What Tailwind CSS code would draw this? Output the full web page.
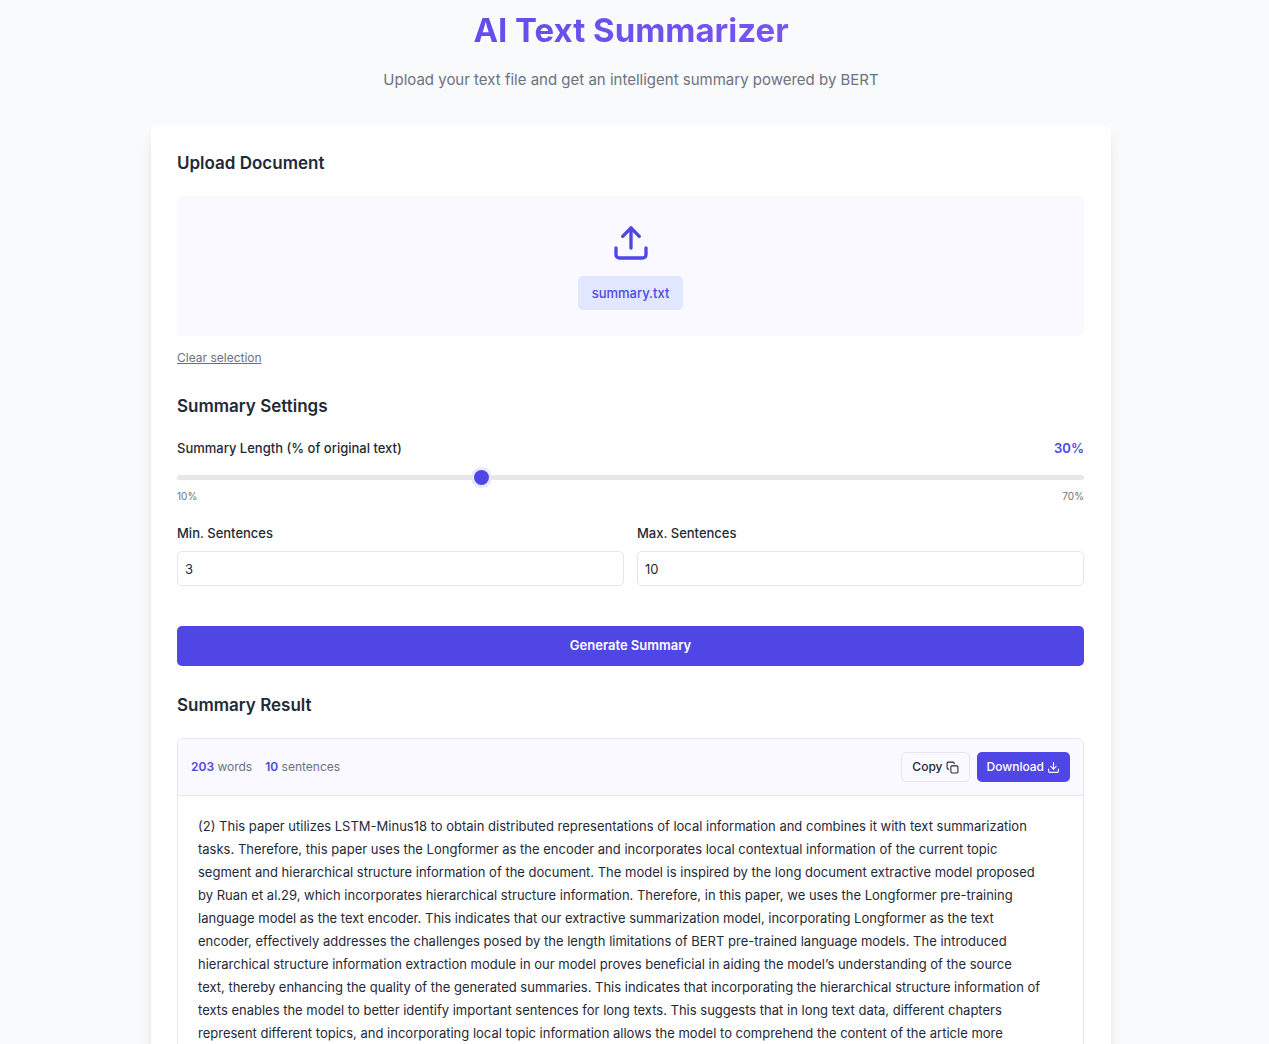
<!DOCTYPE html>
<html lang="en">
<head>
<meta charset="utf-8">
<meta name="viewport" content="width=device-width, initial-scale=1">
<title>AI Text Summarizer</title>
<script src="https://cdn.jsdelivr.net/npm/@tailwindcss/browser@4"></script>
</head>
<body class="min-h-screen bg-[#f9fafc] pr-[7px] font-['Inter',sans-serif] text-[13px] text-[#1f2937]">
<div class="mx-auto max-w-[960px]">
  <header class="pt-2 pb-[33px] text-center">
    <h1 class="bg-linear-to-r/srgb from-[#4f46e5] to-[#8b5cf6] bg-clip-text text-[33px] leading-[44px] font-bold text-transparent">AI Text Summarizer</h1>
    <p class="mt-4 text-[15px] leading-6 text-[#6b7280]">Upload your text file and get an intelligent summary powered by BERT</p>
  </header>
  <main class="rounded-lg bg-white pt-[26px] pr-[27px] pb-8 pl-[26px] shadow-lg">
    <section>
      <h2 class="text-[17px] leading-6 font-semibold">Upload Document</h2>
      <label class="mt-[21px] flex h-[140px] flex-col items-center rounded-md bg-[#f9f9ff] pt-[27px]">
        <input type="file" class="sr-only">
        <svg class="size-10 text-[#4f46e5]" viewBox="0 0 24 24" fill="none" stroke="currentColor" stroke-width="2" stroke-linecap="round" stroke-linejoin="round" aria-hidden="true"><path d="M21 15v4a2 2 0 0 1-2 2H5a2 2 0 0 1-2-2v-4"/><path d="m17 8-5-5-5 5"/><path d="M12 3v12"/></svg>
        <span class="mt-[13px] rounded-[5px] bg-[#e0e7ff] px-[14px] py-[7px] text-[13px] leading-5 font-medium text-[#4f46e5]">summary.txt</span>
      </label>
      <button type="button" class="mt-[14px] block text-[12px] leading-4 text-[#6b7280] underline">Clear selection</button>
    </section>
    <section class="mt-7">
      <h2 class="text-[17px] leading-6 font-semibold">Summary Settings</h2>
      <div class="mt-5 flex justify-between leading-5 font-medium">
        <label for="length">Summary Length (% of original text)</label>
        <output for="length" class="font-semibold text-[#4f46e5]">30%</output>
      </div>
      <input id="length" type="range" min="10" max="70" value="30" class="mt-[17px] block h-[5px] w-full appearance-none rounded-full bg-[#e5e7eb] [&::-webkit-slider-thumb]:size-[15px] [&::-webkit-slider-thumb]:appearance-none [&::-webkit-slider-thumb]:rounded-full [&::-webkit-slider-thumb]:bg-[#4f46e5] [&::-webkit-slider-thumb]:shadow-[0_0_0_3px_#e9e8fc]">
      <div class="mt-2 flex justify-between text-[10px] leading-4 text-[#6b7280]"><span>10%</span><span>70%</span></div>
      <div class="mt-[19px] grid grid-cols-2 gap-[13px]">
        <div>
          <label for="min" class="block leading-5 font-medium">Min. Sentences</label>
          <input id="min" type="text" inputmode="numeric" value="3" class="mt-2 block h-[35px] w-full rounded-[5px] border border-[#e5e7eb] px-[7px]">
        </div>
        <div>
          <label for="max" class="block leading-5 font-medium">Max. Sentences</label>
          <input id="max" type="text" inputmode="numeric" value="10" class="mt-2 block h-[35px] w-full rounded-[5px] border border-[#e5e7eb] px-[7px]">
        </div>
      </div>
      <button type="button" class="mt-10 block h-10 w-full rounded-[5px] bg-[#4f46e5] font-semibold text-white">Generate Summary</button>
    </section>
    <section class="mt-[27px]">
      <h2 class="text-[17px] leading-6 font-semibold">Summary Result</h2>
      <article class="mt-[21px] overflow-hidden rounded-md border border-[#e5e7eb]">
        <div class="flex h-[57px] items-center justify-between border-b border-[#e5e7eb] bg-[#f9f9ff] px-[13px]">
          <div class="flex gap-[13px] text-[12px] text-[#6b7280]">
            <span><strong class="font-semibold text-[#4f46e5]">203</strong> words</span>
            <span><strong class="font-semibold text-[#4f46e5]">10</strong> sentences</span>
          </div>
          <div class="flex gap-[7px] text-[12px] font-medium">
            <button type="button" class="flex h-[30px] items-center gap-[3px] rounded-[5px] border border-[#e5e7eb] px-[10px]">Copy
              <svg class="size-[13px]" viewBox="0 0 24 24" fill="none" stroke="currentColor" stroke-width="2" stroke-linecap="round" stroke-linejoin="round" aria-hidden="true"><rect x="9" y="9" width="13" height="13" rx="2"/><path d="M5 15H4a2 2 0 0 1-2-2V4a2 2 0 0 1 2-2h9a2 2 0 0 1 2 2v1"/></svg></button>
            <button type="button" class="flex h-[30px] items-center gap-[3px] rounded-[5px] bg-[#4f46e5] px-[10px] text-white">Download
              <svg class="size-[13px]" viewBox="0 0 24 24" fill="none" stroke="currentColor" stroke-width="2" stroke-linecap="round" stroke-linejoin="round" aria-hidden="true"><path d="M21 15v4a2 2 0 0 1-2 2H5a2 2 0 0 1-2-2v-4"/><path d="m7 10 5 5 5-5"/><path d="M12 15V3"/></svg></button>
          </div>
        </div>
        <p class="pt-[19px] pr-[41px] pb-5 pl-5 text-[13px] leading-[23px]">(2) This paper utilizes LSTM-Minus18 to obtain distributed representations of local information and combines it with text summarization tasks. Therefore, this paper uses the Longformer as the encoder and incorporates local contextual information of the current topic segment and hierarchical structure information of the document. The model is inspired by the long document extractive model proposed by Ruan et al.29, which incorporates hierarchical structure information. Therefore, in this paper, we uses the Longformer pre-training language model as the text encoder. This indicates that our extractive summarization model, incorporating Longformer as the text encoder, effectively addresses the challenges posed by the length limitations of BERT pre-trained language models. The introduced hierarchical structure information extraction module in our model proves beneficial in aiding the model’s understanding of the source<br>text, thereby enhancing the quality of the generated summaries. This indicates that incorporating the hierarchical structure information of texts enables the model to better identify important sentences for long texts. This suggests that in long text data, different chapters represent different topics, and incorporating local topic information allows the model to comprehend the content of the article more</p>
      </article>
    </section>
  </main>
</div>
</body>
</html>
